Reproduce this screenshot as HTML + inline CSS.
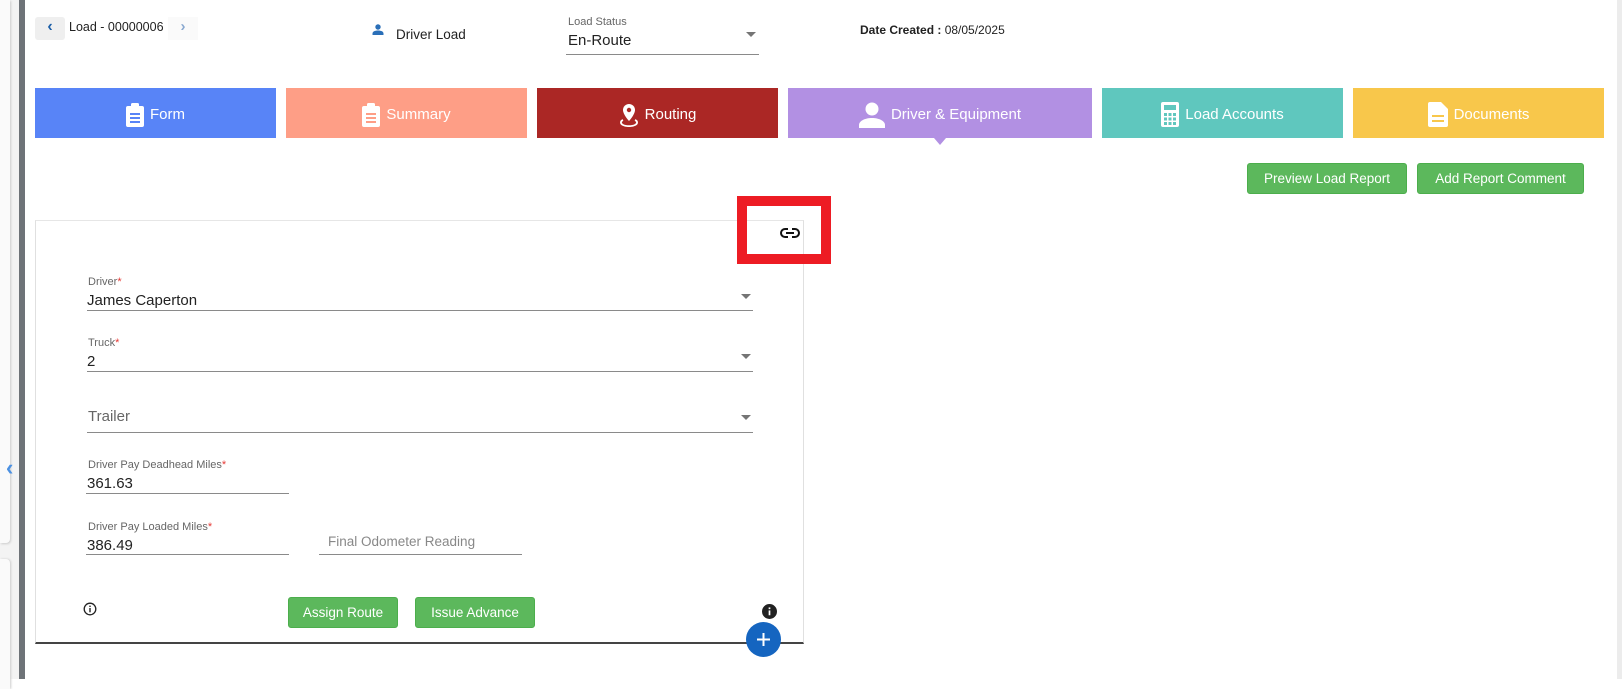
<!DOCTYPE html>
<html><head><meta charset="utf-8"><style>
*{box-sizing:border-box;margin:0;padding:0}
body{width:1622px;height:679px;background:#fff;position:relative;overflow:hidden;font-family:"Liberation Sans","DejaVu Sans",sans-serif;color:#222}
.a{position:absolute}
.tab{position:absolute;top:88px;height:50px;padding-top:3px;color:#fff;font-size:15px;display:flex;align-items:center;justify-content:center;gap:6px}
.btn{position:absolute;background:#5cb85c;border:1px solid #4cae4c;border-radius:3px;color:#fff;font-size:13.5px;display:flex;align-items:center;justify-content:center}
.lbl{position:absolute;font-size:11px;color:#666}
.lbl b{color:#e53935;font-weight:normal}
.val{position:absolute;font-size:15px;color:#222}
.line{position:absolute;height:1px;background:#8a8a8a}
.arr{position:absolute;width:0;height:0;border-left:5px solid transparent;border-right:5px solid transparent;border-top:5px solid #757575}
</style></head><body>
<div class="a" style="left:0;top:0;width:19px;height:679px;background:#f3f3f3"></div>
<div class="a" style="left:0;top:0;width:10px;height:543px;background:#fafafa;border-radius:0 0 4px 0;box-shadow:1px 1px 2px #ccc"></div>
<div class="a" style="left:0;top:559px;width:10px;height:130px;background:#fafafa;border-radius:0 4px 0 0;box-shadow:1px 0 2px #ccc"></div>
<div class="a" style="left:6px;top:455px;color:#4a90e2;font-size:22px;font-weight:bold">&#8249;</div>
<div class="a" style="left:19px;top:0;width:6px;height:679px;background:#6e7378"></div>
<div class="a" style="left:1617px;top:0;width:5px;height:679px;background:#ececec"></div>

<div class="a" style="left:35px;top:17px;width:30px;height:23px;background:#efefef;border-radius:3px;color:#1d5fa8;font-size:16px;text-align:center;line-height:20px;font-weight:bold">&#8249;</div>
<div class="a" style="left:69px;top:20px;font-size:12.5px">Load - 00000006</div>
<div class="a" style="left:168px;top:17px;width:30px;height:23px;background:#fafafa;color:#8aa9d0;font-size:15px;text-align:center;line-height:20px;font-weight:bold">&#8250;</div>
<svg class="a" style="left:372px;top:24px" width="12" height="11" viewBox="0 0 12 11"><circle cx="6" cy="3" r="2.7" fill="#2a6fb8"/><path d="M0.5 11v-1.5c0-2 2.5-3 5.5-3s5.5 1 5.5 3V11z" fill="#2a6fb8"/></svg>
<div class="a" style="left:396px;top:27px;font-size:13.5px">Driver Load</div>
<div class="a" style="left:568px;top:16px;font-size:11px;color:#666">Load Status</div>
<div class="a" style="left:568px;top:32px;font-size:15px">En-Route</div>
<div class="arr" style="left:746px;top:32px"></div>
<div class="line" style="left:566px;top:54px;width:193px"></div>
<div class="a" style="left:860px;top:23px;font-size:12px"><b>Date Created :</b> 08/05/2025</div>

<div class="tab" style="left:35px;width:241px;background:#5884f7"><svg width="18" height="24" viewBox="0 0 18 24"><rect x="0" y="3" width="18" height="21" rx="2" fill="#fff"/><rect x="5" y="0" width="8" height="6" rx="1.5" fill="#fff"/><rect x="4" y="10" width="10" height="2" fill="#5884f7"/><rect x="4" y="14" width="10" height="2" fill="#5884f7"/><rect x="4" y="18" width="10" height="2" fill="#5884f7"/></svg>Form</div>
<div class="tab" style="left:286px;width:241px;background:#fe9e86"><svg width="18" height="24" viewBox="0 0 18 24"><rect x="0" y="3" width="18" height="21" rx="2" fill="#fff"/><rect x="5" y="0" width="8" height="6" rx="1.5" fill="#fff"/><rect x="4" y="10" width="10" height="2" fill="#fe9e86"/><rect x="4" y="14" width="10" height="2" fill="#fe9e86"/><rect x="4" y="18" width="10" height="2" fill="#fe9e86"/></svg>Summary</div>
<div class="tab" style="left:537px;width:241px;background:#ab2725"><svg width="20" height="24" viewBox="0 0 20 24"><path d="M10 1a6 6 0 0 0-6 6c0 4.5 6 11 6 11s6-6.5 6-11a6 6 0 0 0-6-6z" fill="#fff"/><circle cx="10" cy="7" r="2.2" fill="#ab2725"/><path d="M4 17c-2.5 1-3 3.5 0 5s9 1.5 12 0 2.5-4 0-5" fill="none" stroke="#fff" stroke-width="1.8"/></svg>Routing</div>
<div class="tab" style="left:788px;width:304px;background:#b290e3"><svg width="26" height="26" viewBox="0 0 26 26"><circle cx="13" cy="7" r="6.5" fill="#fff"/><path d="M0 26v-3c0-4 6-7 13-7s13 3 13 7v3z" fill="#fff"/></svg>Driver &amp; Equipment</div>
<div class="a" style="left:934px;top:138px;width:0;height:0;border-left:6px solid transparent;border-right:6px solid transparent;border-top:7px solid #b290e3"></div>
<div class="tab" style="left:1102px;width:241px;background:#5fc7be"><svg width="18" height="25" viewBox="0 0 18 25"><rect x="0" y="0" width="18" height="25" rx="2" fill="#fff"/><rect x="3" y="3" width="12" height="5" fill="#5fc7be"/><g fill="#5fc7be"><rect x="3" y="11" width="3" height="3"/><rect x="7.5" y="11" width="3" height="3"/><rect x="12" y="11" width="3" height="3"/><rect x="3" y="15.5" width="3" height="3"/><rect x="7.5" y="15.5" width="3" height="3"/><rect x="12" y="15.5" width="3" height="3"/><rect x="3" y="20" width="3" height="3"/><rect x="7.5" y="20" width="3" height="3"/><rect x="12" y="20" width="3" height="3"/></g></svg>Load Accounts</div>
<div class="tab" style="left:1353px;width:251px;background:#f8c74b"><svg width="20" height="25" viewBox="0 0 20 25"><path d="M2 0h11l7 7v16a2 2 0 0 1-2 2H2a2 2 0 0 1-2-2V2a2 2 0 0 1 2-2z" fill="#fff"/><rect x="4" y="13" width="12" height="2" fill="#f8c74b"/><rect x="4" y="18" width="12" height="2" fill="#f8c74b"/></svg>Documents</div>

<div class="btn" style="left:1247px;top:163px;width:160px;height:31px">Preview Load Report</div>
<div class="btn" style="left:1417px;top:163px;width:167px;height:31px">Add Report Comment</div>

<div class="a" style="left:35px;top:220px;width:769px;height:424px;border:1px solid #e0e0e0;border-bottom:2px solid #444;border-top-color:#e6e6e6"></div>
<div class="a" style="left:737px;top:196px;width:94px;height:68px;border:10px solid #ed1c24"></div>
<svg class="a" style="left:780px;top:227px" width="20" height="12" viewBox="0 0 20 12"><path d="M8 2H5a4 4 0 0 0 0 8h3M12 2h3a4 4 0 0 1 0 8h-3M6 6h8" fill="none" stroke="#111" stroke-width="2"/></svg>

<div class="lbl" style="left:88px;top:276px">Driver<b>*</b></div>
<div class="val" style="left:87px;top:292px">James Caperton</div>
<div class="arr" style="left:741px;top:294px"></div>
<div class="line" style="left:87px;top:310px;width:666px"></div>

<div class="lbl" style="left:88px;top:337px">Truck<b>*</b></div>
<div class="val" style="left:87px;top:353px">2</div>
<div class="arr" style="left:741px;top:354px"></div>
<div class="line" style="left:87px;top:371px;width:666px"></div>

<div class="val" style="left:88px;top:408px;color:#666">Trailer</div>
<div class="arr" style="left:741px;top:415px"></div>
<div class="line" style="left:87px;top:432px;width:666px"></div>

<div class="lbl" style="left:88px;top:459px">Driver Pay Deadhead Miles<b>*</b></div>
<div class="val" style="left:87px;top:475px">361.63</div>
<div class="line" style="left:86px;top:493px;width:203px"></div>

<div class="lbl" style="left:88px;top:521px">Driver Pay Loaded Miles<b>*</b></div>
<div class="val" style="left:87px;top:537px">386.49</div>
<div class="line" style="left:86px;top:554px;width:203px"></div>
<div class="a" style="left:328px;top:534px;font-size:13.5px;color:#888">Final Odometer Reading</div>
<div class="line" style="left:319px;top:554px;width:203px"></div>

<svg class="a" style="left:83px;top:602px" width="14" height="14" viewBox="0 0 14 14"><circle cx="7" cy="7" r="5.8" fill="none" stroke="#222" stroke-width="1.3"/><rect x="6.3" y="6" width="1.4" height="4.3" fill="#222"/><rect x="6.3" y="3.6" width="1.4" height="1.4" fill="#222"/></svg>

<div class="btn" style="left:288px;top:597px;width:110px;height:31px">Assign Route</div>
<div class="btn" style="left:415px;top:597px;width:120px;height:31px">Issue Advance</div>

<svg class="a" style="left:762px;top:604px" width="15" height="15" viewBox="0 0 14 14"><circle cx="7" cy="7" r="7" fill="#222"/><rect x="6.2" y="6" width="1.6" height="4.5" fill="#fff"/><rect x="6.2" y="3.2" width="1.6" height="1.6" fill="#fff"/></svg>
<div class="a" style="left:746px;top:622px;width:35px;height:35px;border-radius:50%;background:#1565c0"></div>
<svg class="a" style="left:755px;top:631px" width="17" height="17" viewBox="0 0 17 17"><path d="M8.5 2v13M2 8.5h13" stroke="#fff" stroke-width="2"/></svg>
</body></html>
